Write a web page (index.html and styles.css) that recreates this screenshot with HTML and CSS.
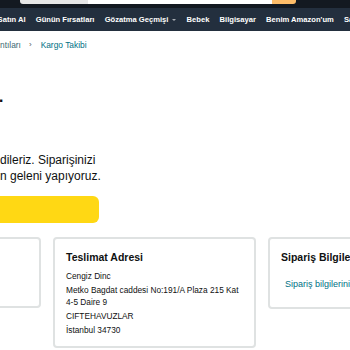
FILE: index.html
```html
<!DOCTYPE html>
<html lang="tr">
<head>
<meta charset="utf-8">
<title>Kargo Takibi</title>
<link rel="stylesheet" href="styles.css">
</head>
<body>
<header class="belt">
  <div class="search">
    <div class="search-dd"></div>
    <div class="search-input"></div>
    <div class="search-btn"></div>
  </div>
</header>
<nav class="subnav">
  <a class="nav-item">Satın Al</a>
  <a class="nav-item">Günün Fırsatları</a>
  <a class="nav-item">Gözatma Geçmişi<span class="caret"></span></a>
  <a class="nav-item">Bebek</a>
  <a class="nav-item">Bilgisayar</a>
  <a class="nav-item">Benim Amazon'um</a>
  <a class="nav-item">Satış Yap</a>
</nav>
<main class="page">
  <div class="crumbs">
    <span class="crumb">ntıları</span>
    <span class="sep">›</span>
    <span class="crumb current">Kargo Takibi</span>
  </div>
  <h1 class="title">.</h1>
  <p class="msg">dileriz. Siparişinizi<br>n geleni yapıyoruz.</p>
  <div class="cta"></div>
  <section class="cards">
    <div class="card card-blank"></div>
    <div class="card">
      <h2 class="card-title">Teslimat Adresi</h2>
      <div class="addr">Cengiz Dinc</div>
      <div class="addr">Metko Bagdat caddesi No:191/A Plaza 215 Kat 4-5 Daire 9</div>
      <div class="addr">CIFTEHAVUZLAR</div>
      <div class="addr">İstanbul 34730</div>
    </div>
    <div class="card card-info">
      <h2 class="card-title">Sipariş Bilgileri</h2>
      <a class="info-link">Sipariş bilgilerini görüntüleyin</a>
    </div>
  </section>
</main>
</body>
</html>
```
FILE: styles.css
```css
html, body {
  margin: 0;
  padding: 0;
  background: #ffffff;
}
body {
  width: 350px;
  height: 350px;
  overflow: hidden;
  font-family: "Liberation Sans", Arial, sans-serif;
  color: #0f1111;
}
.belt {
  height: 8px;
  background: #131921;
}
.search {
  display: flex;
  margin-left: 20px;
  width: 276px;
  height: 3.5px;
  border-radius: 0 0 3px 3px;
  overflow: hidden;
}
.search-dd {
  width: 68px;
  background: #e6e6e6;
}
.search-input {
  flex: 1;
  background: #ffffff;
}
.search-btn {
  width: 24px;
  background: #febd69;
}
.subnav {
  height: 23px;
  background: #232f3e;
  display: flex;
  align-items: center;
  gap: 10.2px;
  margin-left: -2.4px;
  white-space: nowrap;
}
.nav-item {
  color: #ffffff;
  font-size: 7.6px;
  font-weight: bold;
  display: flex;
  align-items: center;
}
.caret {
  display: inline-block;
  margin-left: 4px;
  width: 0;
  height: 0;
  border-left: 2px solid transparent;
  border-right: 2px solid transparent;
  border-top: 2.5px solid #a7acb2;
}
.page {
  padding-top: 8px;
}
.crumbs {
  display: flex;
  align-items: center;
  font-size: 8.4px;
  line-height: 12px;
  height: 12px;
}
.crumb {
  color: #3c6a73;
}
.crumb.current {
  color: #007185;
}
.sep {
  color: #565959;
  font-size: 8px;
  margin: 0 9px 0 8px;
}
.title {
  margin: 36px 0 0 -1.3px;
  font-size: 17px;
  line-height: 20px;
  font-weight: bold;
}
.msg {
  margin: 45px 0 0 0;
  font-size: 12px;
  line-height: 16px;
}
.cta {
  margin: 12px 0 0 -20px;
  width: 119px;
  height: 27px;
  border-radius: 6px;
  background: #ffd814;
}
.cards {
  display: grid;
  grid-template-columns: 203px 203px 203px;
  column-gap: 12px;
  align-items: start;
  margin: 14px 0 0 -162px;
}
.card {
  border: 2px solid #dfe2e2;
  border-radius: 4px;
  padding: 11px 12px 10px 11px;
}
.card-blank {
  height: 71px;
  box-sizing: border-box;
}
.card-title {
  margin: 0 0 6px 0;
  font-size: 10.5px;
  line-height: 14px;
  font-weight: bold;
}
.addr {
  font-size: 8.3px;
  line-height: 12px;
  margin-top: 2px;
}
.addr:first-of-type {
  margin-top: 0;
}
.card-info {
  height: 72px;
  box-sizing: border-box;
}
.info-link {
  display: block;
  margin-top: 14px;
  padding-left: 4px;
  font-size: 9px;
  line-height: 12px;
  color: #007185;
  white-space: nowrap;
}
```
